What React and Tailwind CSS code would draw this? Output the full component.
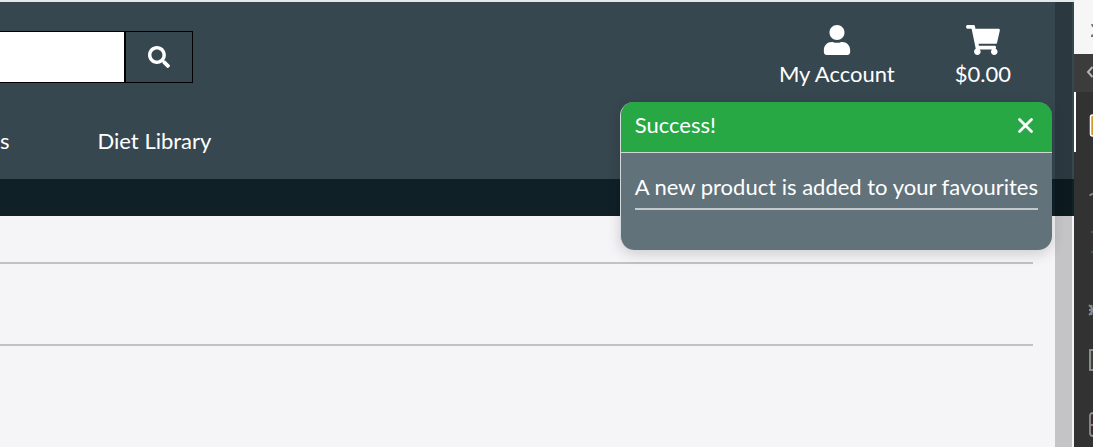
import { FaSearch, FaUser, FaShoppingCart } from "react-icons/fa";

function Header() {
  return (
    <header>
      <div className="border-t-2 border-[#e4e8ea] bg-[#37474f] pb-6 text-white">
        <div className="flex justify-between pr-[63px]">
          <form className="mt-7 flex h-13 pt-px" onSubmit={(e) => e.preventDefault()}>
            <input
              type="search"
              aria-label="Search products"
              className="h-13 w-[125px] border-y border-r border-black bg-white px-3 text-[#222] outline-none"
            />
            <button
              type="submit"
              aria-label="Search"
              className="flex h-13 w-17 items-center justify-center border border-black"
            >
              <FaSearch size={22} />
            </button>
          </form>
          <div className="flex gap-15 pt-[23px]">
            <a href="#account" className="flex flex-col items-center gap-[3px]">
              <FaUser size={30} />
              <span className="leading-8">My Account</span>
            </a>
            <a href="#cart" className="flex flex-col items-center gap-[3px]">
              <FaShoppingCart className="h-[30px] w-[34px]" />
              <span className="leading-8">$0.00</span>
            </a>
          </div>
        </div>
        <nav className="flex gap-22 pt-[37px]">
          <a href="#products" className="leading-7">s</a>
          <a href="#diet" className="leading-7">Diet Library</a>
        </nav>
      </div>
      <div className="h-[37px] bg-[#102027]" />
    </header>
  );
}

function Toast() {
  return (
    <div
      role="alert"
      className="absolute top-[102px] right-[22px] overflow-hidden rounded-[14px] border-l border-[#d5dadd] bg-[#62727b] text-white shadow-[0_4px_14px_rgba(0,0,0,0.16)]"
    >
      <div className="flex h-[51px] items-center justify-between border-b border-[#cfd8d2] bg-[#28a745] px-3.5 pb-1">
        <span className="leading-8">Success!</span>
        <button type="button" aria-label="Close" className="p-1">
          <svg width="17" height="17" viewBox="0 0 17 17" stroke="white" strokeWidth="2.8" strokeLinecap="round">
            <path d="M2.500 2.500 14.500 14.500M14.500 2.500 2.500 14.500" />
          </svg>
        </button>
      </div>
      <div className="px-3.5 pt-[18px] pb-10">
        <p className="border-b-2 border-[#c5c9cc] pb-[5px] leading-8">A new product is added to your favourites</p>
      </div>
    </div>
  );
}

function EditorStrip() {
  return (
    <aside className="w-[19px] shrink-0 overflow-hidden bg-[#323233]">
      <div className="h-[54px] bg-[#f6f6f6]">
        <svg width="19" height="54" fill="#777">
          <path d="M17 24h2v3h-1zM17 35l2-1v3h-2z" />
        </svg>
      </div>
      <div className="h-[38px] bg-[#3c3c3c]">
        <svg width="19" height="38" fill="none" stroke="#b5b5b5" strokeWidth="2">
          <path d="M18.500 13 14 18 18.500 23" />
        </svg>
      </div>
      <div className="h-[60px] border-l-2 border-white">
        <svg width="17" height="60">
          <rect x="14.500" y="23" width="16" height="21" rx="2" fill="#d29a35" stroke="white" strokeWidth="1.5" />
        </svg>
      </div>
      <svg width="19" height="295" fill="none" stroke="#8d8d92" strokeWidth="1.8">
        <path d="M15.500 43.500 19 41.500" />
        <path d="M17 80h2M17 100h2" stroke="#34586b" />
        <path d="M15 153l4 4M15 163l4-4M15 158h4M17.500 153v10" stroke="#858995" />
        <rect x="16" y="198" width="16" height="20" fill="#463c38" stroke="#8a9c98" />
        <rect x="16" y="261" width="16" height="23" rx="3" fill="#3c2b29" />
        <path d="M16 273h3" />
      </svg>
    </aside>
  );
}

export default function App() {
  return (
    <div className="flex min-h-screen overflow-hidden bg-[#f5f5f8] font-['Lato',sans-serif] text-[22px]">
      <div className="relative min-w-0 flex-1">
        <Header />
        <main className="mr-[41px] pt-[46px]">
          <hr className="border-t-2 border-[#c2c2c4]" />
          <hr className="mt-20 border-t-2 border-[#c2c2c4]" />
        </main>
        <div className="absolute top-0.5 right-0.5 bottom-0 w-[17px] bg-black/20" />
        <Toast />
      </div>
      <EditorStrip />
    </div>
  );
}
